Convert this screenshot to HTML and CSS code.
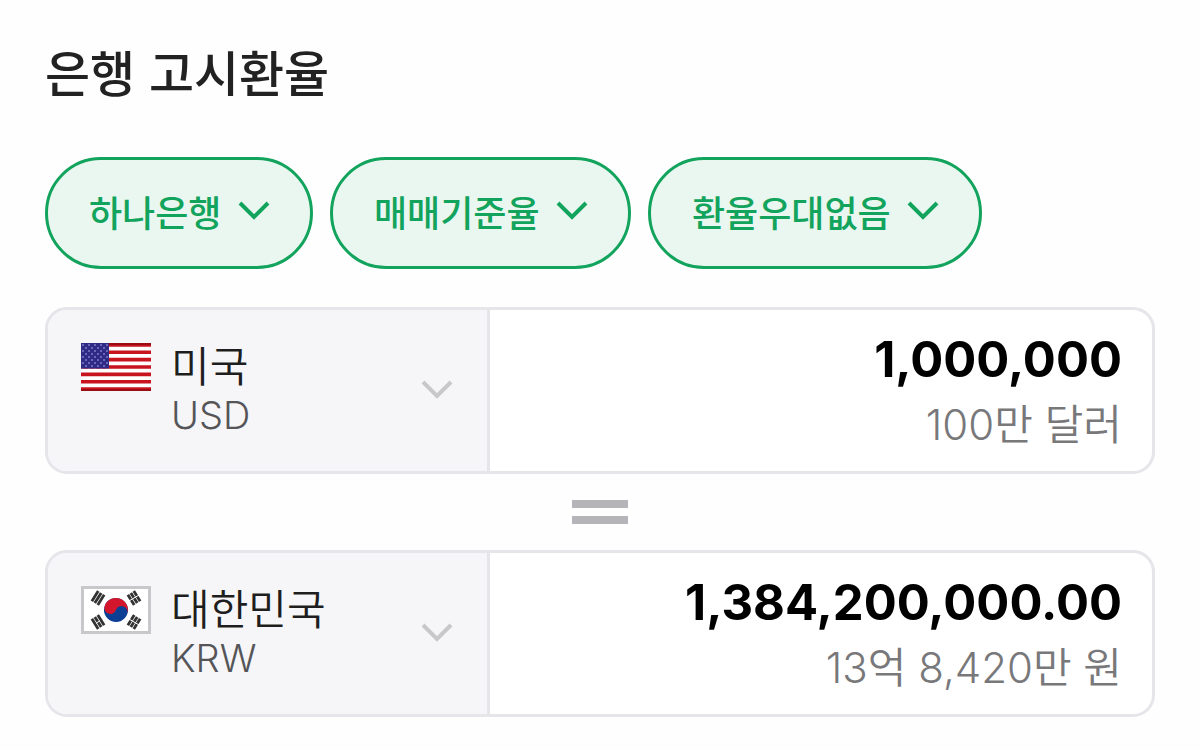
FILE: index.html
```
<!DOCTYPE html>
<html lang="ko">
<head>
    <meta charset="UTF-8">
    <meta name="viewport" content="width=device-width, initial-scale=1.0">
    <title>은행 고시환율</title>
    <link rel="stylesheet" href="styles.css">
</head>
<body>
    <main class="exchange">
        <h1 class="title">은행 고시환율</h1>

        <div class="filters">
            <label class="pill">
                <select class="pill-select" aria-label="은행">
                    <option>하나은행</option>
                </select>
                <svg class="arrow" viewBox="0 0 32 20" aria-hidden="true"><path d="M2 2l14 14L30 2"/></svg>
            </label>
            <label class="pill">
                <select class="pill-select" aria-label="환율 기준">
                    <option>매매기준율</option>
                </select>
                <svg class="arrow" viewBox="0 0 32 20" aria-hidden="true"><path d="M2 2l14 14L30 2"/></svg>
            </label>
            <label class="pill">
                <select class="pill-select" aria-label="환율 우대">
                    <option>환율우대없음</option>
                </select>
                <svg class="arrow" viewBox="0 0 32 20" aria-hidden="true"><path d="M2 2l14 14L30 2"/></svg>
            </label>
        </div>

        <div class="card">
            <label class="currency">
                <svg class="flag" viewBox="0 0 70 48" aria-hidden="true">
                    <defs>
                        <pattern id="stars" width="6" height="6" patternUnits="userSpaceOnUse">
                            <circle cx="2" cy="2" r="1" fill="#7f7bc8"/>
                            <circle cx="5" cy="5" r="1" fill="#7f7bc8"/>
                        </pattern>
                    </defs>
                    <rect width="70" height="48" fill="#fff"/>
                    <path d="M0 1.85h70M0 9.23h70M0 16.62h70M0 24h70M0 31.38h70M0 38.77h70M0 46.15h70" stroke="#c8141e" stroke-width="3.7"/>
                    <path d="M0 1h70M0 47h70" stroke="#9c0c14" stroke-width="2"/>
                    <rect width="28" height="25.5" fill="#2f2a86"/>
                    <rect width="28" height="25.5" fill="url(#stars)"/>
                </svg>
                <span class="currency-text">
                    <select class="country" aria-label="통화">
                        <option>미국</option>
                    </select>
                    <span class="code">USD</span>
                </span>
                <svg class="arrow arrow-gray" viewBox="0 0 32 20" aria-hidden="true"><path d="M2 2l14 14L30 2"/></svg>
            </label>
            <div class="amount">
                <input class="amount-input" type="text" inputmode="decimal" value="1,000,000" aria-label="달러 금액">
                <span class="amount-unit">100만 달러</span>
            </div>
        </div>

        <div class="equals" aria-hidden="true"></div>

        <div class="card">
            <label class="currency">
                <svg class="flag" viewBox="0 0 70 48" aria-hidden="true">
                    <defs>
                        <g id="bars">
                            <path d="M-3.5 -6v12M0 -6v12M3.5 -6v12" stroke="#333" stroke-width="2.8"/>
                        </g>
                    </defs>
                    <rect x="1.5" y="1.5" width="67" height="45" fill="#fff" stroke="#c8c8ca" stroke-width="3"/>
                    <g transform="rotate(20 35 24)">
                        <circle cx="35" cy="24" r="12" fill="#0b3f94"/>
                        <path d="M23 24a12 12 0 0 1 24 0a6 6 0 0 0-12 0a6 6 0 0 1-12 0z" fill="#d3162b"/>
                    </g>
                    <use href="#bars" transform="translate(17 12) rotate(32)"/>
                    <use href="#bars" transform="translate(53 12) rotate(-32)"/>
                    <use href="#bars" transform="translate(17 36) rotate(-32)"/>
                    <use href="#bars" transform="translate(53 36) rotate(32)"/>
                    <path d="M48 15l10-6M15 37.3l4-2.6M48 33l10 6" stroke="#fff" stroke-width="1"/>
                </svg>
                <span class="currency-text">
                    <select class="country" aria-label="통화">
                        <option>대한민국</option>
                    </select>
                    <span class="code">KRW</span>
                </span>
                <svg class="arrow arrow-gray" viewBox="0 0 32 20" aria-hidden="true"><path d="M2 2l14 14L30 2"/></svg>
            </label>
            <div class="amount">
                <input class="amount-input" type="text" inputmode="decimal" value="1,384,200,000.00" aria-label="원 금액">
                <span class="amount-unit">13억 8,420만 원</span>
            </div>
        </div>
    </main>
</body>
</html>
```
FILE: styles.css
```
* {
    margin: 0;
    padding: 0;
    box-sizing: border-box;
}

body {
    font-family: Inter, "Noto Sans CJK KR", sans-serif;
    background: #fefefe;
    color: #1e1e20;
}

select, input {
    appearance: none;
    border: none;
    background: none;
    color: inherit;
    font-family: inherit;
}

.exchange {
    padding: 37px 45px 32px;
}

.title {
    font-family: "Noto Sans CJK KR", sans-serif;
    font-size: 49px;
    font-weight: 500;
    line-height: 68px;
    color: #222;
    margin-bottom: 52px;
}

.filters {
    display: flex;
    gap: 17px;
    margin-bottom: 38px;
}

.pill {
    display: flex;
    align-items: center;
    gap: 16px;
    height: 112px;
    padding: 0 40px 4px 41px;
    border: 3px solid #12a35d;
    border-radius: 56px;
    background: #eaf7f0;
    color: #12a35d;
    cursor: pointer;
}

.pill-select {
    font-family: "Noto Sans CJK KR", sans-serif;
    font-size: 36px;
    font-weight: 500;
    line-height: 52px;
}

.arrow {
    flex: none;
    width: 32px;
    height: 20px;
    fill: none;
    stroke: currentColor;
    stroke-width: 4;
}

.arrow-gray {
    align-self: center;
    color: #c8c8ca;
}

.card {
    display: grid;
    grid-template-columns: 2fr 3fr;
    border: 3px solid #e5e5ea;
    border-radius: 22px;
    overflow: hidden;
    background: #fff;
}

.currency {
    display: flex;
    align-items: flex-start;
    gap: 20px;
    padding: 29px 34px 30px 33px;
    border-right: 3px solid #e5e5ea;
    background: #f6f6f9;
    cursor: pointer;
}

.flag {
    flex: none;
    width: 70px;
    height: 48px;
    margin-top: 4px;
}

.currency-text {
    flex: 1;
    display: flex;
    flex-direction: column;
    align-items: flex-start;
}

.country {
    font-family: "Noto Sans CJK KR", sans-serif;
    font-size: 42px;
    font-weight: 350;
    line-height: 50px;
}

.code {
    font-size: 38px;
    font-weight: 350;
    line-height: 52px;
    color: #555558;
}

.amount {
    display: flex;
    flex-direction: column;
    padding: 20px 30px 11px;
    text-align: right;
}

.amount-input {
    width: 100%;
    font-size: 49px;
    font-weight: 700;
    line-height: 60px;
    text-align: right;
    color: #000;
}

.amount-unit {
    font-size: 42px;
    font-weight: 350;
    line-height: 70px;
    color: #78787b;
}

.equals {
    width: 56px;
    height: 24px;
    margin: 26px auto;
    border: solid #b4b4b9;
    border-width: 8px 0;
}
```
